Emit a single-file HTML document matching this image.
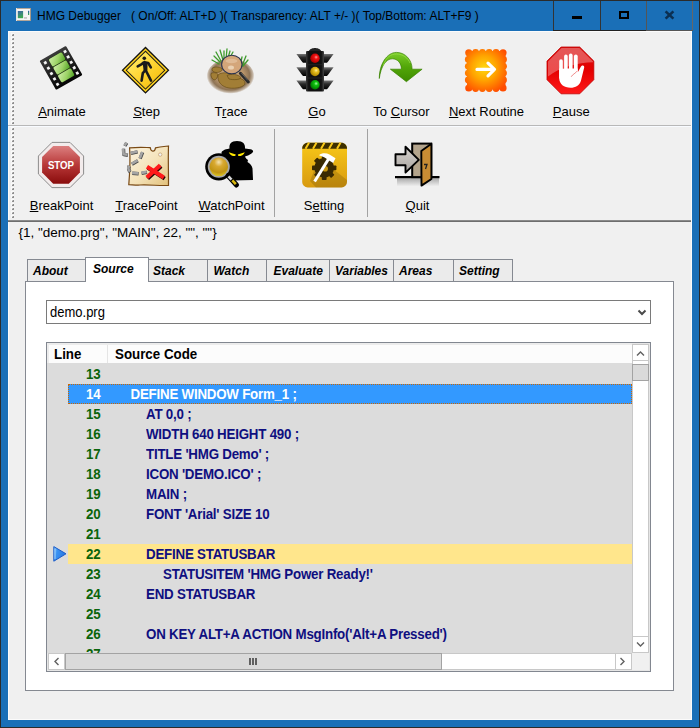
<!DOCTYPE html>
<html><head><meta charset="utf-8">
<style>
*{box-sizing:border-box}
html,body{margin:0;padding:0;width:700px;height:728px;overflow:hidden}
body{background:#2b2b2b;position:relative;font-family:"Liberation Sans",sans-serif;font-size:12px;color:#000}
.a{position:absolute}
#title{left:1px;top:1px;width:698px;height:726px;background:#1a6fb7}
#client{left:8px;top:31px;width:684px;height:689px;background:#f0f0f0;border:1px solid #fbfbfb}
.ttxt{white-space:pre;font-size:12px;color:#000}
.tb{position:absolute;font-size:13px;white-space:pre;text-align:center}
.u{text-decoration:underline;text-underline-offset:1px}
.grip{position:absolute;width:2px;background:repeating-linear-gradient(to bottom,#a8a8a8 0,#a8a8a8 2px,transparent 2px,transparent 4px)}
.sep{position:absolute;width:1px;background:#a2a2a2}
.tab{position:absolute;top:259px;height:22px;border:1px solid #858991;border-bottom:none;background:#ebebeb;font-weight:bold;font-style:italic;font-size:12px;padding-left:5px;padding-top:4px;white-space:pre}
.row{position:absolute;left:47px;width:585px;height:20px;font-weight:bold;font-size:13.33px;letter-spacing:-0.22px;white-space:pre}
.num{position:absolute;left:0;width:53.5px;text-align:right;top:1.8px;transform:scaleY(1.07);transform-origin:0 0;color:#0a640a}
.code{position:absolute;top:1.8px;transform:scaleY(1.07);transform-origin:0 0;color:#0f0f80}
</style></head><body>
<div class="a" id="title"></div>
<!-- title bar -->
<svg class="a" style="left:16px;top:8px" width="15" height="13" viewBox="0 0 15 13"><rect x="0" y="0" width="15" height="13" fill="#f6f6f6"/><rect x="0" y="0" width="15" height="1" fill="#b5a799"/><rect x="0" y="12" width="15" height="1" fill="#b5a799"/><rect x="14" y="0" width="1" height="13" fill="#a8998a"/><rect x="0" y="0" width="1" height="13" fill="#e8e4e0"/><defs><linearGradient id="tig" x1="0" y1="0" x2="0.3" y2="1"><stop offset="0" stop-color="#3c62a8"/><stop offset="1" stop-color="#3eaa52"/></linearGradient><linearGradient id="tib" x1="0" y1="0" x2="0" y2="1"><stop offset="0" stop-color="#2f56b0"/><stop offset="1" stop-color="#40b048"/></linearGradient></defs><rect x="1.8" y="3" width="5.3" height="7.2" fill="url(#tig)"/><rect x="12" y="2.8" width="1.2" height="4.2" fill="url(#tib)"/><rect x="8" y="9" width="3" height="1.8" fill="#c8c8c8"/></svg>

<div class="a ttxt" style="left:37px;top:8.5px;font-size:12px">HMG Debugger   ( On/Off: ALT+D )( Transparency: ALT +/- )( Top/Bottom: ALT+F9 )</div>
<div class="a" style="left:553px;top:1px;width:1px;height:30px;background:#333"></div>
<div class="a" style="left:600px;top:1px;width:1px;height:30px;background:#333"></div>
<div class="a" style="left:646px;top:1px;width:1px;height:30px;background:#555"></div>
<div class="a" style="left:692px;top:1px;width:1px;height:30px;background:#666"></div>
<div class="a" style="left:553px;top:30px;width:93px;height:1px;background:#222"></div>
<div class="a" style="left:646px;top:30px;width:47px;height:1px;background:#555"></div>
<div class="a" style="left:572px;top:16px;width:10px;height:3px;background:#000"></div>
<div class="a" style="left:619px;top:11px;width:10px;height:8px;border:2px solid #000"></div>
<svg class="a" style="left:664px;top:10px" width="11" height="10"><path d="M1.6 1.4 L9.4 8.6 M9.4 1.4 L1.6 8.6" stroke="#0b2f52" stroke-width="2.6"/></svg>

<div class="a" id="client"></div>

<!-- toolbar grips -->
<svg class="a" style="left:11px;top:33px" width="4" height="91" viewBox="0 0 4 91"><defs><pattern id="gp" x="0" y="0" width="4" height="4" patternUnits="userSpaceOnUse"><rect x="0" y="0" width="3" height="3" fill="#fafafa"/><rect x="1" y="1" width="2" height="2" fill="#8e8e8e"/><rect x="1" y="1" width="1" height="1" fill="#c4c4c4"/></pattern></defs><rect x="0" y="0" width="4" height="91" fill="url(#gp)"/></svg>
<svg class="a" style="left:11px;top:127px" width="4" height="91" viewBox="0 0 4 91"><rect x="0" y="0" width="4" height="91" fill="url(#gp)"/></svg>

<div class="a" style="left:8px;top:125px;width:683px;height:1px;background:#b8b8b8"></div>
<div class="a" style="left:8px;top:126px;width:683px;height:1px;background:#f8fbff"></div>
<div class="a" style="left:8px;top:220px;width:683px;height:1px;background:#8a8a8a"></div>
<div class="a" style="left:8px;top:221px;width:683px;height:1px;background:#6e6e6e"></div>
<div class="sep" style="left:274px;top:129px;height:88px"></div>
<div class="sep" style="left:367px;top:129px;height:88px"></div>

<!-- toolbar labels -->
<div class="tb" style="left:22px;width:80px;top:104px"><span class="u">A</span>nimate</div>
<div class="tb" style="left:106.5px;width:80px;top:104px"><span class="u">S</span>tep</div>
<div class="tb" style="left:191px;width:80px;top:104px">T<span class="u">r</span>ace</div>
<div class="tb" style="left:277px;width:80px;top:104px"><span class="u">G</span>o</div>
<div class="tb" style="left:361.5px;width:80px;top:104px">To <span class="u">C</span>ursor</div>
<div class="tb" style="left:446.5px;width:80px;top:104px"><span class="u">N</span>ext Routine</div>
<div class="tb" style="left:531.3px;width:80px;top:104px"><span class="u">P</span>ause</div>

<div class="tb" style="left:21.5px;width:80px;top:198px"><span class="u">B</span>reakPoint</div>
<div class="tb" style="left:106.5px;width:80px;top:198px"><span class="u">T</span>racePoint</div>
<div class="tb" style="left:191.5px;width:80px;top:198px"><span class="u">W</span>atchPoint</div>
<div class="tb" style="left:284px;width:80px;top:198px">S<span class="u">e</span>tting</div>
<div class="tb" style="left:377.5px;width:80px;top:198px"><span class="u">Q</span>uit</div>

<div class="a ttxt" style="left:18.5px;top:225px;font-size:13.5px">{1, "demo.prg", "MAIN", 22, "", ""}</div>

<!-- tabs -->
<div class="tab" style="left:27px;width:59px">About</div>
<div class="tab" style="left:148px;width:60px;padding-left:4px">Stack</div>
<div class="tab" style="left:207px;width:60px;padding-left:5.5px">Watch</div>
<div class="tab" style="left:266px;width:64px;padding-left:6.5px">Evaluate</div>
<div class="tab" style="left:329px;width:65px">Variables</div>
<div class="tab" style="left:393px;width:61px">Areas</div>
<div class="tab" style="left:453px;width:60px">Setting</div>
<div class="a" style="left:25px;top:281px;width:649px;height:410px;background:#fff;border:1px solid #858991"></div>
<div class="tab" style="left:85px;width:64px;top:257px;height:25px;background:#fff;padding-top:4px;padding-left:7px">Source</div>

<!-- combobox -->
<div class="a" style="left:46px;top:300px;width:605px;height:24px;border:1px solid #7a7a7a;background:#fff"></div>
<div class="a ttxt" style="left:50px;top:304px;font-size:13px;transform:scaleY(1.12);transform-origin:0 0">demo.prg</div>
<svg class="a" style="left:637px;top:309px" width="10" height="8"><path d="M1.5 1.5 L5 5 L8.5 1.5" stroke="#4a4a4a" stroke-width="2" fill="none"/></svg>

<!-- listview -->
<div class="a" style="left:46px;top:342px;width:605px;height:330px;border:1px solid #828790;background:#e6e6e6"></div>
<div class="a" style="left:47px;top:363px;width:585px;height:290px;background:#dcdcdc"></div>
<div class="a" style="left:47px;top:343px;width:585px;height:20px;background:#fcfcfc;border-left:2px solid #ececec;border-top:2px solid #ececec"></div>
<div class="a" style="left:107px;top:345px;width:1px;height:18px;background:#e5e5e5"></div>
<div class="a" style="left:54px;top:345.5px;font-weight:bold;font-size:13.33px;transform:scaleY(1.07);transform-origin:0 0">Line</div>
<div class="a" style="left:115px;top:345.5px;font-weight:bold;font-size:13.33px;transform:scaleY(1.07);transform-origin:0 0">Source Code</div>

<div id="rows">
<div class="row" style="top:364px"><span class="num">13</span></div>
<div class="row" style="top:384px"><div class="a" style="left:21px;top:0;width:564px;height:20px;background:#3399ff;outline:1px dotted #cc6600;outline-offset:-1px"></div><span class="num" style="color:#fff">14</span><span class="code" style="left:83.5px;color:#fff">DEFINE WINDOW Form_1 ;</span></div>
<div class="row" style="top:404px"><span class="num">15</span><span class="code" style="left:99px">AT 0,0 ;</span></div>
<div class="row" style="top:424px"><span class="num">16</span><span class="code" style="left:99px">WIDTH 640 HEIGHT 490 ;</span></div>
<div class="row" style="top:444px"><span class="num">17</span><span class="code" style="left:99px">TITLE 'HMG Demo' ;</span></div>
<div class="row" style="top:464px"><span class="num">18</span><span class="code" style="left:99px">ICON 'DEMO.ICO' ;</span></div>
<div class="row" style="top:484px"><span class="num">19</span><span class="code" style="left:99px">MAIN ;</span></div>
<div class="row" style="top:504px"><span class="num">20</span><span class="code" style="left:99px">FONT 'Arial' SIZE 10</span></div>
<div class="row" style="top:524px"><span class="num">21</span></div>
<div class="row" style="top:544px"><div class="a" style="left:21px;top:0;width:564px;height:20px;background:#ffe68c"></div><span class="num">22</span><span class="code" style="left:99px">DEFINE STATUSBAR</span></div>
<div class="row" style="top:564px"><span class="num">23</span><span class="code" style="left:116px">STATUSITEM 'HMG Power Ready!'</span></div>
<div class="row" style="top:584px"><span class="num">24</span><span class="code" style="left:99px">END STATUSBAR</span></div>
<div class="row" style="top:604px"><span class="num">25</span></div>
<div class="row" style="top:624px"><span class="num">26</span><span class="code" style="left:99px">ON KEY ALT+A ACTION MsgInfo('Alt+A Pressed')</span></div>
<div class="row" style="top:644px;height:9px;overflow:hidden"><span class="num">27</span></div>
</div>

<!-- vertical scrollbar -->
<div class="a" style="left:632px;top:344px;width:17px;height:309px;background:#fff;border-left:1px solid #c8c8c8;border-right:1px solid #c8c8c8"></div>
<div class="a" style="left:632px;top:344px;width:17px;height:17px;border:1px solid #c8c8c8;background:#fff"></div>
<svg class="a" style="left:636px;top:350px" width="10" height="7"><path d="M1 5.5 L4.5 2 L8 5.5" stroke="#606060" stroke-width="1.4" fill="none"/></svg>
<div class="a" style="left:632px;top:364px;width:17px;height:17px;border:1px solid #a3a3a3;background:#dadada"></div>
<div class="a" style="left:632px;top:636px;width:17px;height:17px;border:1px solid #c8c8c8;background:#fff"></div>
<svg class="a" style="left:636px;top:641px" width="10" height="7"><path d="M1 1.5 L4.5 5 L8 1.5" stroke="#606060" stroke-width="1.4" fill="none"/></svg>

<!-- horizontal scrollbar -->
<div class="a" style="left:48px;top:653px;width:584px;height:17px;background:#fff;border-top:1px solid #c8c8c8;border-bottom:1px solid #c8c8c8"></div>
<div class="a" style="left:48px;top:653px;width:17px;height:17px;border:1px solid #c8c8c8;background:#fff"></div>
<svg class="a" style="left:53px;top:657px" width="7" height="10"><path d="M5.5 1 L2 4.5 L5.5 8" stroke="#606060" stroke-width="1.4" fill="none"/></svg>
<div class="a" style="left:65px;top:653px;width:377px;height:17px;border:1px solid #a3a3a3;background:#dadada"></div>
<div class="a" style="left:249px;top:658px;width:2px;height:7px;background:#606060"></div>
<div class="a" style="left:252px;top:658px;width:2px;height:7px;background:#606060"></div>
<div class="a" style="left:255px;top:658px;width:2px;height:7px;background:#606060"></div>
<div class="a" style="left:615px;top:653px;width:17px;height:17px;border:1px solid #c8c8c8;background:#fff"></div>
<svg class="a" style="left:619px;top:657px" width="7" height="10"><path d="M1.5 1 L5 4.5 L1.5 8" stroke="#606060" stroke-width="1.4" fill="none"/></svg>
<div class="a" style="left:632px;top:653px;width:17px;height:17px;background:#f0f0f0"></div>

<!-- ICONS -->
<svg class="a" style="left:0;top:0" width="700" height="728" viewBox="0 0 700 728">
<defs>
<linearGradient id="filmG" x1="0" y1="0.2" x2="1" y2="0.8"><stop offset="0" stop-color="#c8eaa0"/><stop offset="0.55" stop-color="#9cd266"/><stop offset="1" stop-color="#5aa82c"/></linearGradient>
<linearGradient id="filmF" x1="0" y1="0" x2="0" y2="1"><stop offset="0" stop-color="#3a3a3a"/><stop offset="1" stop-color="#050505"/></linearGradient>
<linearGradient id="stepY" x1="0" y1="0" x2="1" y2="1"><stop offset="0" stop-color="#fff176"/><stop offset="0.45" stop-color="#ffd83a"/><stop offset="1" stop-color="#f3b800"/></linearGradient>
<radialGradient id="dirt" cx="0.5" cy="0.45" r="0.5"><stop offset="0" stop-color="#d6b488"/><stop offset="0.55" stop-color="#b8946a"/><stop offset="0.8" stop-color="#8e7456"/><stop offset="0.93" stop-color="#c4b6a6"/><stop offset="1" stop-color="#f0f0f0"/></radialGradient>
<linearGradient id="goBody" x1="0" y1="0" x2="1" y2="0"><stop offset="0" stop-color="#3a3a3a"/><stop offset="0.15" stop-color="#111"/><stop offset="0.85" stop-color="#111"/><stop offset="1" stop-color="#444"/></linearGradient>
<linearGradient id="goWing" x1="0" y1="0" x2="0" y2="1"><stop offset="0" stop-color="#777"/><stop offset="0.4" stop-color="#2a2a2a"/><stop offset="1" stop-color="#000"/></linearGradient>
<radialGradient id="redL" cx="0.62" cy="0.38" r="0.6"><stop offset="0" stop-color="#ff9a9a"/><stop offset="0.35" stop-color="#f01010"/><stop offset="1" stop-color="#b00000"/></radialGradient>
<radialGradient id="yelL" cx="0.62" cy="0.38" r="0.6"><stop offset="0" stop-color="#fff0a0"/><stop offset="0.35" stop-color="#e8c020"/><stop offset="1" stop-color="#b08800"/></radialGradient>
<radialGradient id="grnL" cx="0.62" cy="0.38" r="0.6"><stop offset="0" stop-color="#a0ffa0"/><stop offset="0.35" stop-color="#10c010"/><stop offset="1" stop-color="#008000"/></radialGradient>
<linearGradient id="arrG" x1="0" y1="0" x2="0" y2="1"><stop offset="0" stop-color="#7acc2a"/><stop offset="0.5" stop-color="#52a608"/><stop offset="1" stop-color="#3d8c00"/></linearGradient>
<radialGradient id="stampG" gradientUnits="userSpaceOnUse" cx="484" cy="68" r="27"><stop offset="0" stop-color="#ffd810"/><stop offset="0.45" stop-color="#ffa500"/><stop offset="1" stop-color="#ff4c00"/></radialGradient>
<linearGradient id="pauseG" x1="0" y1="0" x2="0" y2="1"><stop offset="0" stop-color="#d81010"/><stop offset="0.5" stop-color="#e40000"/><stop offset="1" stop-color="#ff1a1a"/></linearGradient>
<linearGradient id="stopG" x1="0" y1="0" x2="0" y2="1"><stop offset="0" stop-color="#dc8080"/><stop offset="0.5" stop-color="#b83838"/><stop offset="1" stop-color="#8a0c0c"/></linearGradient>
<linearGradient id="mapG" x1="0" y1="0" x2="1" y2="1"><stop offset="0" stop-color="#fbf4e2"/><stop offset="0.55" stop-color="#f4e2b8"/><stop offset="1" stop-color="#e2c07a"/></linearGradient>
<radialGradient id="lensG" cx="0.5" cy="0.25" r="0.8"><stop offset="0" stop-color="#f4e2b0"/><stop offset="0.3" stop-color="#d8a830"/><stop offset="0.7" stop-color="#c09414"/><stop offset="1" stop-color="#e4d22a"/></radialGradient>
<linearGradient id="setG" x1="0" y1="0" x2="0" y2="1"><stop offset="0" stop-color="#f8c818"/><stop offset="1" stop-color="#d89a10"/></linearGradient>
<linearGradient id="floorG" x1="0" y1="0" x2="0" y2="1"><stop offset="0" stop-color="#9a9a9a"/><stop offset="1" stop-color="#f0f0f0"/></linearGradient>
<linearGradient id="qArr" x1="0" y1="0" x2="0" y2="1"><stop offset="0" stop-color="#d8d4d0"/><stop offset="1" stop-color="#a8a4a0"/></linearGradient>
</defs>

<!-- Animate: film strip -->
<g transform="translate(61,67.9) rotate(-29.6)">
 <rect x="-15.2" y="-16.7" width="30.4" height="33.4" rx="1" fill="url(#filmF)"/>
 <rect x="-7" y="-13.8" width="15.5" height="27.2" rx="1.5" fill="#1e3010"/>
 <rect x="-6.8" y="-13.6" width="15.1" height="8.6" rx="1.6" fill="url(#filmG)"/>
 <rect x="-6.8" y="-4.3" width="15.1" height="8.4" rx="1.4" fill="url(#filmG)"/>
 <rect x="-6.8" y="4.8" width="15.1" height="8.4" rx="1.6" fill="url(#filmG)"/>
 <g fill="#f4f4f4">
  <rect x="-12.5" y="-13.6" width="2.8" height="2.8"/><rect x="-12.5" y="-7.4" width="2.8" height="2.8"/><rect x="-12.5" y="-1.2" width="2.8" height="2.8"/><rect x="-12.5" y="5" width="2.8" height="2.8"/><rect x="-12.5" y="11.2" width="2.8" height="2.8"/>
  <rect x="10.2" y="-13.6" width="2.8" height="2.8"/><rect x="10.2" y="-7.4" width="2.8" height="2.8"/><rect x="10.2" y="-1.2" width="2.8" height="2.8"/><rect x="10.2" y="5" width="2.8" height="2.8"/><rect x="10.2" y="11.2" width="2.8" height="2.8"/>
 </g>
</g>

<!-- Step: diamond sign -->
<polygon points="145.5,46.6 169.4,70.2 145.5,93.8 121.6,70.2" fill="#111"/>
<polygon points="145.5,48.4 167.6,70.2 145.5,92 123.4,70.2" fill="#ffd21c"/>
<polygon points="145.5,50.6 165.4,70.2 145.5,89.8 125.6,70.2" fill="#1a1a1a"/>
<polygon points="145.5,51.9 164.1,70.2 145.5,88.5 126.9,70.2" fill="url(#stepY)"/>
<circle cx="144.3" cy="58.3" r="1.8" fill="#1a1a1a"/>
<path d="M137.7 66.3 L141.3 64.3 L144.5 62.2 L148.2 63 L150.8 67.3 M144.5 62 L145.6 70 M141.6 80.6 L142.8 73.2 L145.6 70 L151 80.6" stroke="#1a1a1a" stroke-width="2.6" fill="none" stroke-linecap="round" stroke-linejoin="round"/>
<path d="M142.6 61.6 L147.6 62.2 L147.4 70.5 L143.6 71 Z" fill="#1a1a1a"/>

<!-- Trace: dirt + magnifier -->
<ellipse cx="230.5" cy="77" rx="24" ry="18.5" fill="url(#dirt)"/>
<g fill="#a27e36" stroke="#5e4412" stroke-width="0.6">
 <path d="M212 68.5 C214 66.5 219 66.5 222 68.5 C223 71 220 72.5 216 72.5 C213 72 211.5 70.5 212 68.5 Z"/>
 <path d="M211 73.5 C213 72 217 72.5 218 74.5 C218 77 216 80 214 80 C212 79 210.5 76 211 73.5 Z"/>
 <path d="M218 75 C221 72 228 72 232 75 C236 78 245 78 245 83 C245 87 236 89 229 88 C222 87 217 82 218 75 Z"/>
 <path d="M227 75.5 C231 73.5 238 74 241 77.5 C240 80 233 80 229 79 Z"/>
</g>
<g stroke="#3e9a2c" stroke-width="1.3" fill="none" stroke-linecap="round">
 <path d="M214 56 L220 62 M216 52 L221 61 M220 50 L223 60 M224 51 L224 59 M227 49 L226 59 M230 51 L228 58 M233 52 L229 59 M212 60 L219 64"/>
 <path d="M238 63 L241 67 M242 57 L240 66 M246 56 L242 66 M248 60 L243 66"/>
</g>
<ellipse cx="231.8" cy="64.5" rx="10.2" ry="9.3" fill="#d4a67a" stroke="#2c3550" stroke-width="1.1"/>
<ellipse cx="231.5" cy="61" rx="6" ry="2.2" fill="#e8caa8" opacity="0.6"/>
<ellipse cx="231" cy="67.5" rx="3" ry="2" fill="#f4e4cc" opacity="0.7"/>
<path d="M240.4 73.3 L248.3 82" stroke="#2a2a2a" stroke-width="3" stroke-linecap="round"/>
<path d="M241.5 73.2 L247.5 80" stroke="#707070" stroke-width="0.8" stroke-linecap="round"/>

<!-- Go: traffic light -->
<g fill="url(#goWing)">
 <path d="M296.4 54 L306.5 54 L306.5 62.8 L303 62.8 C301 60.5 299 57.5 296.4 54 Z"/>
 <path d="M296.4 67.2 L306.5 67.2 L306.5 76 L303 76 C301 73.7 299 70.7 296.4 67.2 Z"/>
 <path d="M296.4 80.4 L306.5 80.4 L306.5 89.2 L303 89.2 C301 86.9 299 83.9 296.4 80.4 Z"/>
 <path d="M333.6 54 L323.5 54 L323.5 62.8 L327 62.8 C329 60.5 331 57.5 333.6 54 Z"/>
 <path d="M333.6 67.2 L323.5 67.2 L323.5 76 L327 76 C329 73.7 331 70.7 333.6 67.2 Z"/>
 <path d="M333.6 80.4 L323.5 80.4 L323.5 89.2 L327 89.2 C329 86.9 331 83.9 333.6 80.4 Z"/>
</g>
<path d="M308.5 51.5 C310 48.5 313 48 315 48 C317 48 320 48.5 321.5 51.5 Z" fill="#222"/>
<rect x="306" y="51" width="18" height="40.5" rx="1" fill="url(#goBody)"/>
<path d="M308 64.8 H322 M308 78 H322" stroke="#2a2a2a" stroke-width="0.8"/>
<circle cx="315" cy="58.3" r="4.7" fill="url(#redL)"/>
<circle cx="315" cy="71.5" r="4.7" fill="url(#yelL)"/>
<circle cx="315" cy="84.7" r="4.7" fill="url(#grnL)"/>

<!-- To Cursor: green arrow -->
<path d="M379.3 78.5 C379.3 64 387 52.4 396.4 52.4 C405.5 52.4 412.1 60 412.1 69.2 L422.1 69.2 L406.4 81.7 L390.4 69.2 L401.4 69.2 C401.4 63 397.5 58.8 392.3 58.8 C386 58.8 381 66 379.3 78.5 Z" fill="url(#arrG)" stroke="#3a8200" stroke-width="0.7"/>
<path d="M383 66 C386 57 391 54 396.4 54 C403 54 408 58 410 63" stroke="#9ae048" stroke-width="1" fill="none" opacity="0.7"/>

<!-- Next Routine: stamp -->
<g fill="url(#stampG)">
 <rect x="467" y="51" width="38.5" height="38.5"/>
 <circle cx="468.8" cy="52.8" r="3.6"/><circle cx="475.6" cy="52.3" r="3.4"/><circle cx="482.4" cy="52.3" r="3.4"/><circle cx="489.2" cy="52.3" r="3.4"/><circle cx="496" cy="52.3" r="3.4"/><circle cx="503" cy="52.8" r="3.6"/>
 <circle cx="468.8" cy="88" r="3.6"/><circle cx="475.6" cy="88.5" r="3.4"/><circle cx="482.4" cy="88.5" r="3.4"/><circle cx="489.2" cy="88.5" r="3.4"/><circle cx="496" cy="88.5" r="3.4"/><circle cx="503" cy="88" r="3.6"/>
 <circle cx="468.3" cy="59.5" r="3.4"/><circle cx="468.3" cy="66.3" r="3.4"/><circle cx="468.3" cy="73.1" r="3.4"/><circle cx="468.3" cy="79.9" r="3.4"/>
 <circle cx="503.5" cy="59.5" r="3.4"/><circle cx="503.5" cy="66.3" r="3.4"/><circle cx="503.5" cy="73.1" r="3.4"/><circle cx="503.5" cy="79.9" r="3.4"/>
</g>
<path d="M477 69.4 L494.3 69.4 M488 63.2 L494.5 69.4 L488 75.8" stroke="#fff" stroke-width="3.2" fill="none" stroke-linecap="round" stroke-linejoin="round"/>

<!-- Pause: red octagon w/ hand -->
<polygon points="561.1,47 579.7,47 593.8,61.1 593.8,79.7 579.7,93.8 561.1,93.8 547,79.7 547,61.1" fill="url(#pauseG)" stroke="#c00000" stroke-width="0.8"/>
<path d="M561.5 48 L579.3 48 L593 61.6 L593 62.2 C578 62.5 560 67 548 76.5 L548 61.5 Z" fill="#fff" opacity="0.3"/>
<g fill="#fff">
 <rect x="559.2" y="59.3" width="3.6" height="20" rx="1.8"/>
 <rect x="564.1" y="54.6" width="3.6" height="22" rx="1.8"/>
 <rect x="568.9" y="53.6" width="3.7" height="22" rx="1.8"/>
 <rect x="573.9" y="54.6" width="3.8" height="22" rx="1.9"/>
 <path d="M559.2 68.5 L577.7 68.5 L577.7 72.5 L580.8 66.8 C581.8 64.8 584.6 64.8 584.2 67.5 L581 80.5 C579.7 85.5 575.5 87.8 570.5 87.8 C564 87.8 559.2 84 559.2 78 Z"/>
</g>
<path d="M571.2 76.8 C572.5 74.2 575.5 73.5 577.2 71" stroke="#e03030" stroke-width="0.55" fill="none"/>

<!-- BreakPoint: STOP -->
<polygon points="52,142.4 70,142.4 83.6,156 83.6,174 70,187.6 52,187.6 38.4,174 38.4,156" fill="#f3ecec" stroke="#8c8c8c" stroke-width="1"/>
<polygon points="53.2,145.9 68.8,145.9 79.9,157 79.9,172.6 68.8,183.7 53.2,183.7 42.1,172.6 42.1,157" fill="url(#stopG)"/>
<text x="61" y="169.2" text-anchor="middle" font-family="Liberation Sans" font-weight="bold" font-size="11.3" fill="#fff" textLength="26.2" lengthAdjust="spacingAndGlyphs">STOP</text>

<!-- TracePoint: map -->
<path d="M129.6 147.8 C140 147 145 147.5 150.2 147.6 C150.8 151.5 154.5 153 155.5 147.8 C160 146.8 164 146.5 168.5 146 C168 158 168.6 172 168.5 185.4 C160 186 150 184.5 140 185 C136 185.2 132 184.7 128.8 184.6 C129.8 172 130.5 160 129.6 147.8 Z" fill="url(#mapG)" stroke="#7a4a14" stroke-width="1.2"/>
<circle cx="160.2" cy="154.6" r="1.7" fill="#f4f4f4" stroke="#b89060" stroke-width="0.6"/>
<g fill="none" stroke-linecap="butt" stroke-linejoin="round">
<path id="dsh" d="M126.4 142.5 L124.6 145.6 M123.2 148.4 L123.5 154.2 L127.6 154.8 M130.6 153 L137.3 151.4 M142.3 151.9 L139.8 158.3 M137.6 160.3 L131.6 163.8 M128.9 165.7 C128 167.5 128 169.5 129.9 171.7 M131.9 172.9 L138.3 173.4 M141.3 172.9 L146.7 171.9" stroke="#4a4a4a" stroke-width="3.4" transform="translate(0.3,0.4)"/>
<path d="M126.4 142.5 L124.6 145.6 M123.2 148.4 L123.5 154.2 L127.6 154.8 M130.6 153 L137.3 151.4 M142.3 151.9 L139.8 158.3 M137.6 160.3 L131.6 163.8 M128.9 165.7 C128 167.5 128 169.5 129.9 171.7 M131.9 172.9 L138.3 173.4 M141.3 172.9 L146.7 171.9" stroke="#a4a4a4" stroke-width="2.6"/>
</g>
<path d="M147 166.8 L163.8 177.5 M160.2 165.2 L146.8 177.5" stroke="#2a0808" stroke-width="4" transform="translate(0.9,1.1)"/>
<path d="M147 166.8 L163.8 177.5 M160.2 165.2 L146.8 177.5" stroke="#ff1a1a" stroke-width="4"/>

<!-- WatchPoint: spy -->
<path d="M229.5 148.5 C229 144 231 141 237 141 C243 141 245.5 144 245 148.5 L250.5 149.3 C253.5 150 254 152 251.5 153.5 C249.5 155 246.5 156 245 156.5 C245.5 158 246.5 159 248 160 L247.5 162 C250 163.5 252 165.5 252.5 168.5 L253 180 L232 180.5 L228 176 C226 170 224 164 224.5 156 C223 155.5 221.5 154.5 221.5 153 C221.5 151 224 149.5 229.5 148.5 Z" fill="#000"/>
<path d="M228.8 152.2 L235.8 154.5 L235.2 156.1 C232.5 156.2 229.8 155 228.8 152.2 Z M244.8 152.2 L237.8 154.5 L238.4 156.1 C241 156.2 243.8 155 244.8 152.2 Z" fill="#ffe800"/>
<circle cx="218.8" cy="166.8" r="13.6" fill="#000"/>
<circle cx="218.8" cy="166.8" r="11" fill="#a8a8a8"/>
<circle cx="218.8" cy="166.8" r="9.3" fill="url(#lensG)"/>
<path d="M228 175.5 L236.5 185" stroke="#000" stroke-width="5" stroke-linecap="round"/>
<path d="M228.5 176.3 L231.5 179.7" stroke="#d8d8d8" stroke-width="2.6"/>
<path d="M232.3 180.3 L235.8 184.2" stroke="#d8b810" stroke-width="2.6"/>

<!-- Setting -->
<rect x="302.2" y="142.8" width="44.8" height="44.6" rx="5.5" fill="url(#setG)"/>
<path d="M302.2 148.8 V148.3 C302.2 145.3 304.7 142.8 307.7 142.8 H341.5 C344.5 142.8 347 145.3 347 148.3 V148.8 Z" fill="#3e3000"/>
<path d="M305.5 148.8 L309 142.8 M313 148.8 L316.5 142.8 M321 148.8 L324.5 142.8 M329 148.8 L332.5 142.8 M337 148.8 L340.5 142.8" stroke="#f8c818" stroke-width="2"/>
<path d="M319 158 L347 180 V182 C347 185 344.5 187.4 341.5 187.4 H316 L310 181 Z" fill="#000" opacity="0.14"/>
<g transform="translate(324.2,167.8)">
 <circle r="9.8" fill="#3a2a02"/>
 <g fill="#3a2a02">
  <rect x="-2.4" y="-12.2" width="4.8" height="24.4" rx="0.8"/>
  <rect x="-2.4" y="-12.2" width="4.8" height="24.4" rx="0.8" transform="rotate(45)"/>
  <rect x="-2.4" y="-12.2" width="4.8" height="24.4" rx="0.8" transform="rotate(90)"/>
  <rect x="-2.4" y="-12.2" width="4.8" height="24.4" rx="0.8" transform="rotate(135)"/>
 </g>
 <circle cx="1" cy="1" r="2.8" fill="#c8960e"/>
</g>
<path d="M314.6 181.5 L329.3 157.8" stroke="#fff" stroke-width="3" stroke-linecap="butt"/>
<path d="M319 155.2 C321.5 153 326 152.8 329.5 154.5 L335.5 158.3 L333.2 163 L328.8 160.2 C326 158 322.5 156.3 319 155.2 Z" fill="#fff"/>

<!-- Quit: door -->
<rect x="397" y="178.3" width="42" height="8" fill="url(#floorG)" opacity="0.8"/>
<path d="M395 177.2 H439.5" stroke="#000" stroke-width="2.2"/>
<rect x="412.2" y="143.6" width="19" height="33.5" fill="#b3a48c" stroke="#000" stroke-width="2"/>
<path d="M395.5 154.2 H405.5 V146.8 L418.8 159.9 L405.5 172.6 V165.2 H395.5 Z" fill="url(#qArr)" stroke="#000" stroke-width="1.9" stroke-linejoin="round"/>
<path d="M421.3 151 L431.4 143.8 V179 L421.5 185.6 Z" fill="#c88c34" stroke="#000" stroke-width="1.9" stroke-linejoin="round"/>
<path d="M424 164.5 H427 L425.5 169" stroke="#222" stroke-width="1.3" fill="none"/>

<!-- row marker -->
<linearGradient id="triG" x1="0" y1="0" x2="1" y2="0.3"><stop offset="0" stop-color="#8ccaff"/><stop offset="0.35" stop-color="#3a92f2"/><stop offset="1" stop-color="#2a78e0"/></linearGradient>
<polygon points="53.8,546.6 66,553.8 53.8,561.2" fill="url(#triG)" stroke="#1c5cc8" stroke-width="1" stroke-linejoin="round"/>
<path d="M55 548.8 L55 559" stroke="#b0dcff" stroke-width="0.9" opacity="0.9"/>
</svg>

</body></html>
